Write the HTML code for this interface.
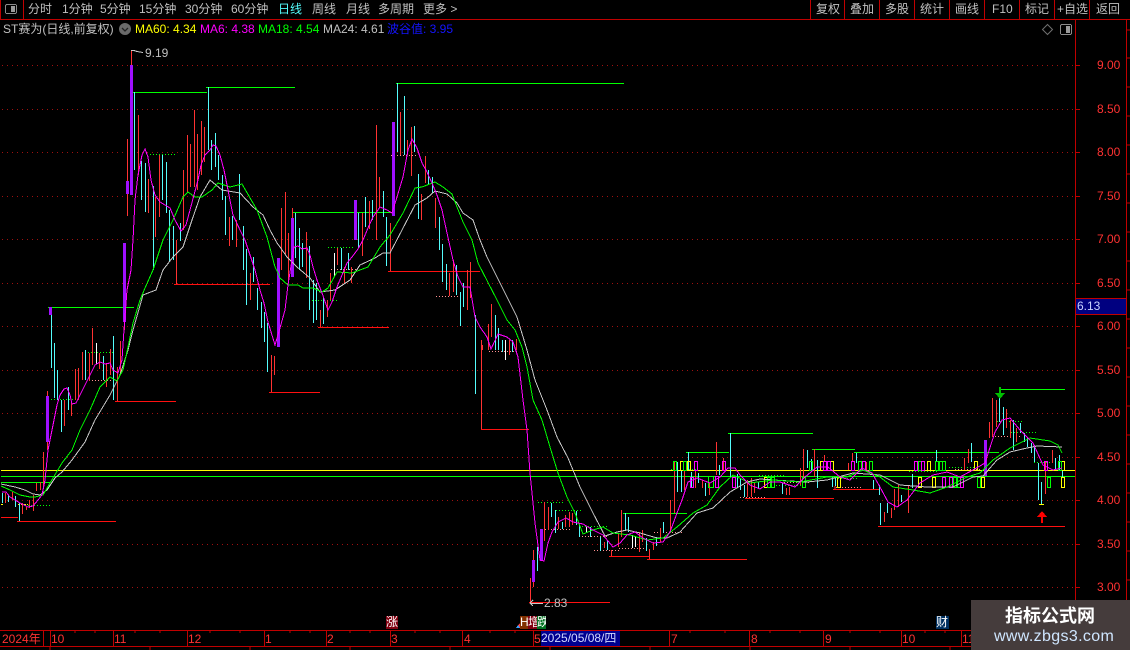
<!DOCTYPE html>
<html><head><meta charset="utf-8"><title>ST赛为</title>
<style>
html,body{margin:0;padding:0;background:#000;width:1130px;height:650px;overflow:hidden}
#w{position:relative;width:1130px;height:650px;background:#000;overflow:hidden;font-family:"Liberation Sans","WenQuanYi Zen Hei","Noto Sans CJK SC",sans-serif;font-size:12px;color:#c0c0c0}
.t{position:absolute;white-space:nowrap;line-height:14px}
svg{position:absolute;left:0;top:0}
.r{color:#ff3232}
</style></head><body><div id="w">
<svg width="1130" height="650" shape-rendering="crispEdges" fill="none">
<!-- frame -->
<path stroke="#c00000" d="M0 19.5H1130M0.5 0V19M23.5 0V19M810.5 0V19M844.5 0V19M879.5 0V19M914.5 0V19M949.5 0V19M984.5 0V19M1019.5 0V19M1054.5 0V19M1089.5 0V19M1075.5 19V630M1126.5 19V646M0 630.5H1130M0 646.5H1130"/>
<path stroke="#c00000" d="M1075 65.5h5M1075 109.5h5M1075 152.5h5M1075 196.5h5M1075 239.5h5M1075 283.5h5M1075 326.5h5M1075 370.5h5M1075 413.5h5M1075 457.5h5M1075 500.5h5M1075 544.5h5M1075 587.5h5M1126 30h4M1126 58h4M1126 87h4M1126 116h4M1126 145h4M1126 174h4M1126 203h4M1126 232h4M1126 261h4M1126 290h4M1126 319h4M1126 348h4M1126 377h4M1126 406h4M1126 435h4M1126 464h4M1126 493h4M1126 522h4M1126 551h4M1126 580h4"/>
<path stroke="#a01010" stroke-dasharray="1 4" d="M2 65.5H1075M2 109.5H1075M2 152.5H1075M2 196.5H1075M2 239.5H1075M2 283.5H1075M2 326.5H1075M2 370.5H1075M2 413.5H1075M2 457.5H1075M2 500.5H1075M2 544.5H1075M2 587.5H1075"/>
<!-- time axis separators -->
<path stroke="#c00000" d="M43.5 630V646M50.5 630V646M113.5 630V646M187.5 630V646M264.5 630V646M326.5 630V646M390.5 630V646M462.5 630V646M533.5 630V646M669.5 630V646M749.5 630V646M823.5 630V646M901.5 630V646M961.5 630V646M50 646v4M150 646v4M250 646v4M350 646v4M450 646v4M550 646v4M650 646v4M750 646v4M850 646v4M950 646v4"/>
<path stroke="#c00000" d="M75 630v3M95 630v3M135 630v3M160 630v3M210 630v3M240 630v3M290 630v3M310 630v3M350 630v3M370 630v3M415 630v3M440 630v3M490 630v3M515 630v3M690 630v3M725 630v3M770 630v3M800 630v3M850 630v3M880 630v3M925 630v3M945 630v3"/>
<!-- level lines -->
<path stroke="#ffff00" d="M1 470.5H1075"/>
<path stroke="#00ff00" d="M1 476.5H1075M1 482.5H50M133 92.5H207M206 87.5H295M48 307.5H134M293 212.5H393M396 83.5H624M538 0"/>
<path stroke="#00ff00" d="M686 452.5H729M728 433.5H813M812 449.5H855M854 452.5H999M1000 389.5H1065M623 513.5H687"/>
<path stroke="#ff1010" d="M1 517.5H18M17 521.5H116M115 401.5H176M174 284.5H270M269 392.5H320M318 327.5H389M388 271.5H480M481 429.5H529M529 602.5H610M609 556.5H650M647 559.5H747M745 498.5H834M833 489.5H880M878 526.5H1065"/>
<!-- dotted levels -->
<path stroke="#00ff00" stroke-dasharray="1 2" d="M150 154.5H176M85 352.5H113M51 399.5H78M27 482.5H50M25 505.5H50M328 247.5H355M309 300.5H337M538 502.5H565M556 510.5H583M579 526.5H607M671 469.5H698M698 476.5H725M759 475.5H786M776 485.5H803M832 478.5H859M909 471.5H937M949 467.5H976M997 421.5H1024M1011 432.5H1038M1034 462.5H1062"/>
<path stroke="#ff9090" stroke-dasharray="1 2" d="M89 380.5H117M391 155.5H418M331 269.5H358M436 296.5H463M489 351.5H517M545 529.5H572M579 536.5H607M594 550.5H621M619 548.5H647M654 532.5H682M740 497.5H765M784 482.5H811M836 487.5H863M955 469.5H982M992 436.5H1020"/>
<path stroke="#ffff00" stroke-dasharray="2 1" d="M1 504.5H4M18 504.5H28"/>
<!-- cyan candles -->
<path stroke="#54fcfc" d="M2.5 493V503M8.5 495V502M15.5 496V507M19.5 503V521M51.5 315V368M54.5 343V398M57.5 370V400M61.5 400V432M68.5 387V410M85.5 350V380M103.5 356V380M113.5 336V400M134.5 92V170M141.5 161V200M145.5 163V212M153.5 186V270M162.5 155V200M166.5 162V213M169.5 210V262M173.5 226V260M180.5 223V241M208.5 87V150M211.5 140V170M215.5 133V167M218.5 155V180M222.5 175V200M225.5 196V235M232.5 216V240M239.5 174V220M243.5 226V270M246.5 249V305M253.5 257V282M257.5 288V310M261.5 302V328M264.5 312V342M267.5 323V372M271.5 366V392M295.5 213V258M299.5 228V270M302.5 243V267M309.5 246V310M313.5 280V323M316.5 283V320M323.5 297V324M341.5 248V270M348.5 253V270M358.5 213V248M365.5 197V227M372.5 200V220M383.5 191V217M386.5 217V266M397.5 83V152M404.5 96V155M414.5 126V152M418.5 174V219M428.5 170V185M432.5 177V193M439.5 217V250M442.5 244V282M446.5 264V290M456.5 265V295M460.5 292V326M463.5 283V307M475.5 315V394M495.5 315V350M498.5 328V350M502.5 340V352M512.5 340V352"/>
<path stroke="#54fcfc" d="M537.5 547V571M551.5 503V517M555.5 510V533M562.5 522V529M576.5 511V525M579.5 525V537M590.5 527V537M600.5 537V551M607.5 540V550M625.5 513V530M628.5 517V532M646.5 538V551M656.5 537V546M663.5 522V533M677.5 462V492M681.5 470V492M688.5 452V470M691.5 472V487M698.5 473V483M705.5 483V496M719.5 465V475M730.5 433V477M737.5 474V488M740.5 479V490M744.5 485V497M758.5 482V488M782.5 483V494M807.5 450V468M811.5 459V470M817.5 460V488M832.5 477V487M835.5 477V486M856.5 453V463M873.5 480V489M879.5 485V495M880.5 503V525M887.5 503V513M901.5 495V502M912.5 474V488M936.5 450V461M971.5 443V462M999.5 398V422M1003.5 407V435M1013.5 420V450M1020.5 423V433M1024.5 433V442M1027.5 438V447M1031.5 443V453M1034.5 445V462M1038.5 463V500M1041.5 482V504M1055.5 458V470M1059.5 455V470M1062.5 470V477"/>
<!-- red candles -->
<path stroke="#ff3232" d="M5.5 493V503M12.5 492V500M22.5 503V514M26.5 507V510M29.5 500V508M33.5 495V511M36.5 483V491M40.5 482V490M43.5 452V487M47.5 391V450M64.5 400V426M71.5 403V416M75.5 369V400M78.5 368V400M82.5 352V380M89.5 353V381M92.5 328V365M99.5 353V369M106.5 363V387M110.5 349V375M117.5 367V401M120.5 341V373M124.5 322V330M127.5 139V216M131.5 50V65M138.5 115V175M148.5 179V213M155.5 197V237M159.5 155V217M176.5 240V284M183.5 170V230M187.5 135V192M190.5 144V187M194.5 110V187M197.5 134V190M201.5 121V175M204.5 127V162M229.5 217V246M236.5 220V247M250.5 273V300M274.5 356V375M271.5 355V392M281.5 208V270M285.5 192V255M288.5 233V282M292.5 208V218M306.5 232V278M320.5 310V327M327.5 300V317M330.5 273V300M337.5 248V265M344.5 267V283M351.5 267V283M362.5 213V256M369.5 201V229M376.5 125V240M379.5 177V207M390.5 223V271M400.5 112V155M407.5 140V155M411.5 127V176M421.5 194V220M425.5 156V183M435.5 198V228M449.5 273V296M453.5 260V292M467.5 270V310M470.5 262V298M481.5 340V429M482.5 345V350M488.5 324V350M491.5 304V337M509.5 340V355M516.5 339V350"/>
<path stroke="#ff3232" d="M530.5 578V602M533.5 550V587M544.5 502V541M548.5 507V530M558.5 517V529M565.5 515V527M569.5 512V527M572.5 513V525M604.5 542V548M611.5 550V556M618.5 533V547M621.5 510V537M639.5 532V552M642.5 530V542M649.5 549V559M653.5 542V550M660.5 528V542M670.5 500V533M674.5 462V513M684.5 470V490M695.5 470V488M702.5 480V488M709.5 483V495M716.5 442V475M723.5 458V470M747.5 480V497M751.5 478V497M754.5 483V493M786.5 488V495M789.5 487V495M800.5 468V485M803.5 449V477M814.5 449V477M824.5 455V461M835 486V489M848.5 463V470M852.5 453V461M866.5 462V470M884.5 512V522M891.5 508V518M894.5 489V510M898.5 485V507M908.5 485V513M964.5 458V470M968.5 449V463M989.5 422V438M992.5 398V437M996.5 400V427M1006.5 409V428M1010.5 420V438M1016.5 428V442M1045.5 462V494M1052.5 450V463"/>
<path stroke="#ffffff" d="M96.5 343V364M334.5 253V277M505.5 340V360M586.5 527V532M632.5 535V548M635.5 537V547"/>
<!-- purple solid bodies -->
<g fill="#a010ff">
<rect x="130" y="65" width="3" height="130"/><rect x="126" y="181" width="3" height="13"/>
<rect x="49" y="307" width="3" height="8"/><rect x="46" y="396" width="3" height="46"/>
<rect x="123" y="243" width="3" height="79"/><rect x="277" y="258" width="3" height="89"/>
<rect x="291" y="218" width="3" height="59"/><rect x="354" y="200" width="3" height="40"/>
<rect x="392" y="122" width="3" height="94"/><rect x="532" y="560" width="3" height="22"/>
<rect x="540" y="529" width="3" height="32"/><rect x="984" y="440" width="3" height="36"/>
</g>
<!-- hollow boxes -->
<path stroke="#ffff00" d="M680.5 461.5h3v9h-3zM687.5 461.5h3v9h-3zM820.5 461.5h3v9h-3zM830.5 461.5h3v9h-3zM974.5 461.5h3v9h-3zM1061.5 461.5h3v9h-3zM927.5 461.5h3v9h-3zM764.5 477.5h3v10h-3zM837.5 477.5h3v10h-3zM932.5 477.5h3v10h-3zM918.5 477.5h3v10h-3zM981.5 477.5h3v10h-3zM1061.5 477.5h3v10h-3z"/>
<path stroke="#00ff00" d="M673.5 461.5h3v9h-3zM683.5 461.5h3v9h-3zM809.5 461.5h3v9h-3zM858.5 461.5h3v9h-3zM869.5 461.5h3v9h-3zM935.5 461.5h3v9h-3zM939.5 461.5h3v9h-3zM942.5 461.5h3v9h-3zM1058.5 461.5h3v9h-3zM918.5 461.5h3v9h-3zM708.5 476.5h5v11h-5zM767.5 477.5h3v10h-3zM771.5 477.5h3v10h-3zM802.5 477.5h3v10h-3zM977.5 477.5h3v10h-3zM953.5 477.5h3v10h-3zM957.5 477.5h3v10h-3zM1047.5 477.5h3v10h-3z"/>
<path stroke="#ff00ff" d="M694.5 461.5h3v9h-3zM722.5 461.5h3v9h-3zM823.5 461.5h3v9h-3zM827.5 461.5h3v9h-3zM851.5 461.5h3v9h-3zM862.5 461.5h3v9h-3zM914.5 461.5h3v9h-3zM921.5 461.5h3v9h-3zM1044.5 461.5h3v9h-3zM690.5 477.5h3v10h-3zM715.5 476.5h3v11h-3zM732.5 477.5h3v10h-3zM942.5 477.5h3v10h-3zM949.5 477.5h3v10h-3zM960.5 477.5h3v10h-3z"/>
<!-- MA lines -->
<polyline stroke="#c8c8c8" points="1,484 15,487 25,490 33,494 40,495 47,490 55,478 62,472 72,460 85,442 95,420 110,395 120,375 128,350 133,330 143,295 156,290 163,270 173,257 183,247 192,220 200,197 210,180 222,190 240,193 253,207 263,215 270,230 277,243 280,247 287,257 297,267 310,278 320,292 335,290 350,280 360,265 375,258 383,253 390,253 402,230 415,205 427,198 435,191 447,194 457,203 463,213 473,220 480,240 487,257 500,283 517,317 527,350 535,380 547,410 557,437 568,458 580,487 593,513 605,536 617,532 627,530 640,533 657,538 667,538 680,532 697,513 713,508 730,492 747,482 760,479 773,480 807,482 827,480 853,473 880,475 900,485 927,487 953,487 973,477 983,476 997,460 1010,452 1027,448 1037,446 1062,447"/>
<polyline stroke="#00ff00" points="1,486 10,490 20,495 30,497 35,497 43,495 50,483 62,463 72,450 80,430 90,410 100,387 110,377 117,381 123,370 128,347 133,323 140,300 145,288 153,270 163,240 173,220 183,197 188,192 195,197 202,197 212,190 218,183 230,187 242,184 257,210 267,237 275,267 278,273 280,278 288,285 298,285 303,288 313,288 322,292 328,288 337,272 352,273 360,270 368,267 380,247 390,235 403,213 415,188 422,187 435,182 443,187 452,194 457,207 463,222 472,240 478,263 497,300 507,320 515,330 522,347 527,367 533,400 542,420 550,447 558,473 567,497 575,513 583,534 593,530 603,527 613,533 630,535 647,540 663,538 677,527 693,513 707,505 720,487 733,475 750,483 773,480 800,482 827,477 847,477 863,470 880,477 893,487 913,490 930,493 947,487 967,477 980,473 993,460 1010,448 1030,438 1050,441 1058,445 1062,453"/>
<polyline stroke="#ff00ff" points="2,492 6,492 10,497 15,500 20,503 24,505 28,507 33,506 38,500 42,495 45,480 48,450 50,440 54,420 57,405 60,395 64,389 67,388 70,395 72,404 76,403 80,395 85,385 90,375 95,365 100,362 105,364 110,363 113,370 118,373 122,360 124,330 127,290 131,270 133,240 135,200 138,175 142,155 145,149 148,157 151,180 155,195 160,202 165,205 170,208 175,220 181,231 186,225 190,210 194,195 198,180 201,165 205,155 210,150 213,145 216,146 220,155 224,170 228,190 233,215 240,230 245,240 250,255 255,270 260,290 264,303 268,322 275,345 280,328 285,310 288,285 294,247 298,246 302,249 307,248 310,255 313,267 317,280 322,293 328,310 332,302 337,287 342,275 347,263 352,257 358,249 363,240 368,228 373,217 380,207 387,210 392,213 397,197 403,177 408,150 412,139 417,148 422,163 427,172 432,183 437,195 442,210 447,233 453,260 458,277 463,287 470,287 475,317 480,327 487,337 491,349 498,334 507,337 513,342 518,357 523,400 527,430 530,473 535,523 540,560 544,561 548,543 552,532 558,522 566,518 573,522 583,524 593,530 603,535 613,547 620,543 627,535 635,532 643,538 653,543 663,542 670,532 677,513 682,500 688,482 697,478 710,483 720,477 728,468 735,468 740,475 750,485 760,489 770,482 780,482 795,487 805,477 817,467 828,467 840,477 850,480 862,468 872,473 880,487 888,502 897,507 907,500 920,483 933,475 947,472 960,477 973,470 985,463 995,432 1002,420 1010,418 1020,430 1033,443 1043,465 1053,470 1062,468"/>
<!-- annotations -->
<path stroke="#c8c8c8" d="M131 50.5h3l3 1 6 1M530 603.5h13M530 603l3-3M530 603l3 3"/>
<path stroke="#ffff00" d="M1039 504.5h5"/>
<path fill="#00c000" d="M995 393h10l-5 6z"/><path stroke="#00c000" d="M999.5 387v6M1000.5 387v6"/>
<path fill="#ff0000" d="M1042 511l5 6h-10z"/><rect x="1041" y="517" width="2" height="6" fill="#ff0000"/>
<!-- small icons -->
<rect x="5.5" y="4.5" width="11" height="9" rx="1.5" stroke="#8a8a8a"/><rect x="11" y="6" width="4" height="6" fill="#9a9a9a"/>
<rect x="1060.5" y="24.5" width="11" height="10" rx="1.5" stroke="#8a8a8a"/><rect x="1066" y="26" width="4" height="7" fill="#9a9a9a"/>
<path stroke="#707070" shape-rendering="geometricPrecision" d="M1047.5 24.5l5 5-5 5-5-5z"/>
<circle cx="125" cy="29" r="6" fill="#6a6a6a" shape-rendering="geometricPrecision"/>
<path stroke="#222" stroke-width="1.3" shape-rendering="geometricPrecision" d="M122 28l3 3 3-3"/>
<!-- bottom marker triangle -->
<path fill="#ff4040" d="M516 628l4-5v5z"/><path fill="#30a0ff" d="M516 628l2-3 2 3z"/>
</svg>

<!-- toolbar -->
<div class="t" style="left:28px;top:2px;letter-spacing:0">分时</div>
<div class="t" style="left:62px;top:2px">1分钟</div>
<div class="t" style="left:100px;top:2px">5分钟</div>
<div class="t" style="left:139px;top:2px">15分钟</div>
<div class="t" style="left:185px;top:2px">30分钟</div>
<div class="t" style="left:231px;top:2px">60分钟</div>
<div class="t" style="left:278px;top:2px;color:#54fcfc">日线</div>
<div class="t" style="left:312px;top:2px">周线</div>
<div class="t" style="left:346px;top:2px">月线</div>
<div class="t" style="left:378px;top:2px">多周期</div>
<div class="t" style="left:423px;top:2px">更多 &gt;</div>
<div class="t" style="left:816px;top:2px">复权</div>
<div class="t" style="left:850px;top:2px">叠加</div>
<div class="t" style="left:885px;top:2px">多股</div>
<div class="t" style="left:920px;top:2px">统计</div>
<div class="t" style="left:955px;top:2px">画线</div>
<div class="t" style="left:992px;top:2px">F10</div>
<div class="t" style="left:1025px;top:2px">标记</div>
<div class="t" style="left:1057px;top:2px">+自选</div>
<div class="t" style="left:1096px;top:2px">返回</div>
<!-- legend -->
<div class="t" style="left:3px;top:22px">ST赛为(日线,前复权)</div>
<div class="t" style="left:135px;top:22px;color:#ffff00">MA60: 4.34</div>
<div class="t" style="left:200px;top:22px;color:#ff00ff">MA6: 4.38</div>
<div class="t" style="left:258px;top:22px;color:#00ff00">MA18: 4.54</div>
<div class="t" style="left:323px;top:22px;color:#c0c0c0">MA24: 4.61</div>
<div class="t" style="left:387px;top:22px;color:#1414ff">波谷值: 3.95</div>
<!-- price axis -->
<div class="t r" style="left:1097px;top:58px">9.00</div>
<div class="t r" style="left:1097px;top:102px">8.50</div>
<div class="t r" style="left:1097px;top:145px">8.00</div>
<div class="t r" style="left:1097px;top:189px">7.50</div>
<div class="t r" style="left:1097px;top:232px">7.00</div>
<div class="t r" style="left:1097px;top:276px">6.50</div>
<div class="t r" style="left:1097px;top:319px">6.00</div>
<div class="t r" style="left:1097px;top:363px">5.50</div>
<div class="t r" style="left:1097px;top:406px">5.00</div>
<div class="t r" style="left:1097px;top:450px">4.50</div>
<div class="t r" style="left:1097px;top:493px">4.00</div>
<div class="t r" style="left:1097px;top:537px">3.50</div>
<div class="t r" style="left:1097px;top:580px">3.00</div>
<div style="position:absolute;left:1076px;top:298px;width:50px;height:15px;background:#000080;border-top:1px solid #c00000;border-bottom:1px solid #c00000"></div>
<div class="t" style="left:1077px;top:299px;color:#c8d0ff">6.13</div>
<!-- extremes -->
<div class="t" style="left:145px;top:46px">9.19</div>
<div class="t" style="left:544px;top:596px">2.83</div>
<!-- time axis -->
<div class="t r" style="left:2px;top:632px">2024年</div>
<div class="t r" style="left:51px;top:632px">10</div>
<div class="t r" style="left:114px;top:632px">11</div>
<div class="t r" style="left:188px;top:632px">12</div>
<div class="t r" style="left:265px;top:632px">1</div>
<div class="t r" style="left:327px;top:632px">2</div>
<div class="t r" style="left:391px;top:632px">3</div>
<div class="t r" style="left:464px;top:632px">4</div>
<div class="t r" style="left:534px;top:632px">5</div>
<div class="t" style="left:541px;top:631px;width:79px;height:15px;background:#000090;color:#d0d8ff;line-height:15px">2025/05/08/四</div>
<div class="t r" style="left:671px;top:632px">7</div>
<div class="t r" style="left:751px;top:632px">8</div>
<div class="t r" style="left:825px;top:632px">9</div>
<div class="t r" style="left:902px;top:632px">10</div>
<div class="t r" style="left:962px;top:632px">11</div>
<!-- markers -->
<div class="t" style="left:386px;top:616px;width:12px;height:13px;line-height:13px;background:#800010;color:#fff">涨</div>
<div class="t" style="left:520px;top:616px;width:8px;height:13px;line-height:13px;background:#803000;color:#fff;overflow:hidden">H</div>
<div class="t" style="left:528px;top:616px;width:10px;height:13px;line-height:13px;background:#800010;color:#fff;overflow:hidden">增</div>
<div class="t" style="left:537px;top:616px;width:9px;height:13px;line-height:13px;background:#007020;color:#fff;overflow:hidden">跌</div>
<div class="t" style="left:936px;top:616px;width:13px;height:13px;line-height:13px;background:#003060;color:#fff">财</div>
<!-- watermark -->
<div style="position:absolute;left:971px;top:600px;width:159px;height:50px;background:#453c3c"></div>
<div class="t" style="left:1005px;top:606px;font-size:18px;line-height:20px;font-weight:bold;color:#fff">指标公式网</div>
<div class="t" style="left:994px;top:628px;font-size:16px;line-height:18px;letter-spacing:.35px;color:#cfe6ff">www.zbgs3.com</div>
</div></body></html>
